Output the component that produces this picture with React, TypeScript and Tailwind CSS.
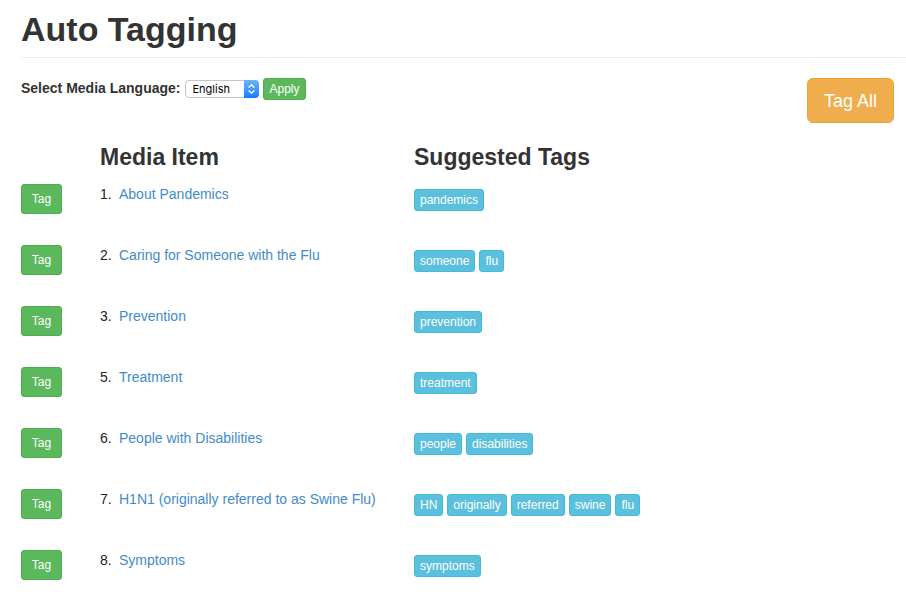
import React from "react";

type MediaItem = { id: number; title: string; tags: string[] };

const items: MediaItem[] = [
  { id: 1, title: "About Pandemics", tags: ["pandemics"] },
  { id: 2, title: "Caring for Someone with the Flu", tags: ["someone", "flu"] },
  { id: 3, title: "Prevention", tags: ["prevention"] },
  { id: 5, title: "Treatment", tags: ["treatment"] },
  { id: 6, title: "People with Disabilities", tags: ["people", "disabilities"] },
  {
    id: 7,
    title: "H1N1 (originally referred to as Swine Flu)",
    tags: ["HN", "originally", "referred", "swine", "flu"],
  },
  { id: 8, title: "Symptoms", tags: ["symptoms"] },
];

function LanguageSelect() {
  return (
    <span className="relative inline-flex">
      <select
        id="language"
        defaultValue="English"
        className="h-[18px] w-[74px] appearance-none rounded border border-[#c4c4c4] bg-white pl-1.5 font-['Inter',sans-serif] text-[11px] leading-4 text-black"
      >
        <option>English</option>
        <option>Spanish</option>
      </select>
      <span className="pointer-events-none absolute inset-y-0 right-0 flex w-[15px] items-center justify-center rounded-r bg-linear-to-b from-[#6bb3fa] to-[#077dff]">
        <svg width="9" height="12" viewBox="0 0 9 12" fill="none" stroke="white" strokeWidth="1.3" strokeLinecap="round" strokeLinejoin="round" aria-hidden="true">
          <path d="M2 4.3 4.5 1.8 7 4.3M2 7.7l2.5 2.5L7 7.7" />
        </svg>
      </span>
    </span>
  );
}

function MediaRow({ item }: { item: MediaItem }) {
  return (
    <tr className="h-[61px] align-top">
      <td className="p-0">
        <button
          type="button"
          aria-label={`Tag ${item.title}`}
          className="h-[30px] w-[41px] rounded-[3px] border border-[#4cae4c] bg-[#5cb85c] text-xs leading-[18px] text-white"
        >
          Tag
        </button>
      </td>
      <td className="p-0">
        <div className="flex text-sm leading-5">
          <span className="w-[19px]">{item.id}.</span>
          <a href="#" className="text-[#428bca]">
            {item.title}
          </a>
        </div>
      </td>
      <td className="px-0 pt-[5px] pb-0">
        <div className="flex flex-wrap gap-1">
          {item.tags.map((tag) => (
            <button
              key={tag}
              type="button"
              className="h-[22px] rounded-[3px] border border-[#46b8da] bg-[#5bc0de] px-[5px] text-xs leading-[18px] text-white"
            >
              {tag}
            </button>
          ))}
        </div>
      </td>
    </tr>
  );
}

export default function App() {
  return (
    <main className="bg-white pl-[21px] font-['Liberation_Sans',Arial,sans-serif] text-[#222]">
      <h1 className="border-b border-[#eee] pt-[10px] pb-[8px] text-[34px] leading-[39px] font-bold text-[#333]">
        Auto Tagging
      </h1>

      <div className="flex items-start justify-between pt-5 pr-3">
        <form className="flex h-[22px] items-center" onSubmit={(e) => e.preventDefault()}>
          <label htmlFor="language" className="mr-[5px] self-start text-sm leading-5 font-bold text-[#333]">
            Select Media Language:
          </label>
          <LanguageSelect />
          <button
            type="submit"
            className="ml-1 h-[22px] rounded-[3px] border border-[#4cae4c] bg-[#5cb85c] px-[5px] text-xs leading-[18px] text-white"
          >
            Apply
          </button>
        </form>
        <button
          type="button"
          className="h-[45px] rounded-md border border-[#eea236] bg-[#f0ad4e] px-4 text-lg leading-6 text-white"
        >
          Tag All
        </button>
      </div>

      <table className="mt-5 w-full table-fixed border-collapse text-left">
        <thead>
          <tr className="h-[41px] align-top text-[23px] leading-7 text-[#333]">
            <td className="w-[79px] p-0" />
            <th scope="col" className="w-[314px] p-0 font-bold">
              Media Item
            </th>
            <th scope="col" className="p-0 font-bold">
              Suggested Tags
            </th>
          </tr>
        </thead>
        <tbody>
          {items.map((item) => (
            <MediaRow key={item.id} item={item} />
          ))}
        </tbody>
      </table>
    </main>
  );
}
